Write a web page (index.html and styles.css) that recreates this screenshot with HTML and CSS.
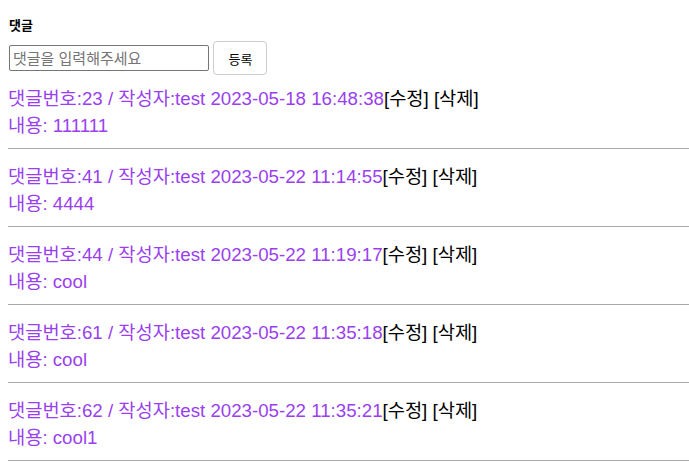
FILE: index.html
```html
<!DOCTYPE html>
<html lang="ko">
<head>
<meta charset="UTF-8">
<title>댓글</title>
<link rel="stylesheet" href="styles.css">
</head>
<body>

<div id="reply-form">
  <h4 class="reply-title">댓글</h4>
  <input type="text" id="reply-input" placeholder="댓글을 입력해주세요" />
  <button id="reply-button">등록</button>
</div>

<div id="reply-list">
  <div class="reply">
    <div class="reply-head">댓글번호:23 / 작성자:test 2023-05-18 16:48:38<span class="reply-actions">[수정] [삭제]</span></div>
    <div class="reply-body">내용: 111111</div>
  </div>
  <hr>
  <div class="reply">
    <div class="reply-head">댓글번호:41 / 작성자:test 2023-05-22 11:14:55<span class="reply-actions">[수정] [삭제]</span></div>
    <div class="reply-body">내용: 4444</div>
  </div>
  <hr>
  <div class="reply">
    <div class="reply-head">댓글번호:44 / 작성자:test 2023-05-22 11:19:17<span class="reply-actions">[수정] [삭제]</span></div>
    <div class="reply-body">내용: cool</div>
  </div>
  <hr>
  <div class="reply">
    <div class="reply-head">댓글번호:61 / 작성자:test 2023-05-22 11:35:18<span class="reply-actions">[수정] [삭제]</span></div>
    <div class="reply-body">내용: cool</div>
  </div>
  <hr>
  <div class="reply">
    <div class="reply-head">댓글번호:62 / 작성자:test 2023-05-22 11:35:21<span class="reply-actions">[수정] [삭제]</span></div>
    <div class="reply-body">내용: cool1</div>
  </div>
  <hr>
</div>

</body>
</html>
```

FILE: styles.css
```css
body {
  font-family: "Liberation Sans", "Noto Sans CJK KR", sans-serif;
  margin: 8px 0 8px 8px;
  background-color: #fff;
  color: #000;
}

.reply-title {
  font-size: 13px;
  font-weight: bold;
  margin: 7px 0 7px 1px;
}

#reply-form {
  margin-bottom: 10px;
}

#reply-input {
  font-family: inherit;
  font-size: 15px;
  width: 200px;
  height: 26px;
  box-sizing: border-box;
  padding: 1px 3px;
  margin: 0 1px;
  border: 1px solid #767676;
  border-radius: 2px;
  vertical-align: middle;
}

#reply-input::placeholder {
  color: #757575;
}

#reply-button {
  font-family: inherit;
  font-size: 13px;
  width: 54px;
  height: 34px;
  margin-left: -1px;
  background-color: #fff;
  border: 1px solid #ccc;
  border-radius: 4px;
  vertical-align: middle;
  cursor: pointer;
}

.reply {
  font-size: 18.7px;
  line-height: 27px;
  color: #9a3ff0;
}

.reply-actions {
  color: #000;
}

hr {
  border: none;
  border-top: 1px solid #aaa;
  margin: 9px 0 14px 0;
}
```
